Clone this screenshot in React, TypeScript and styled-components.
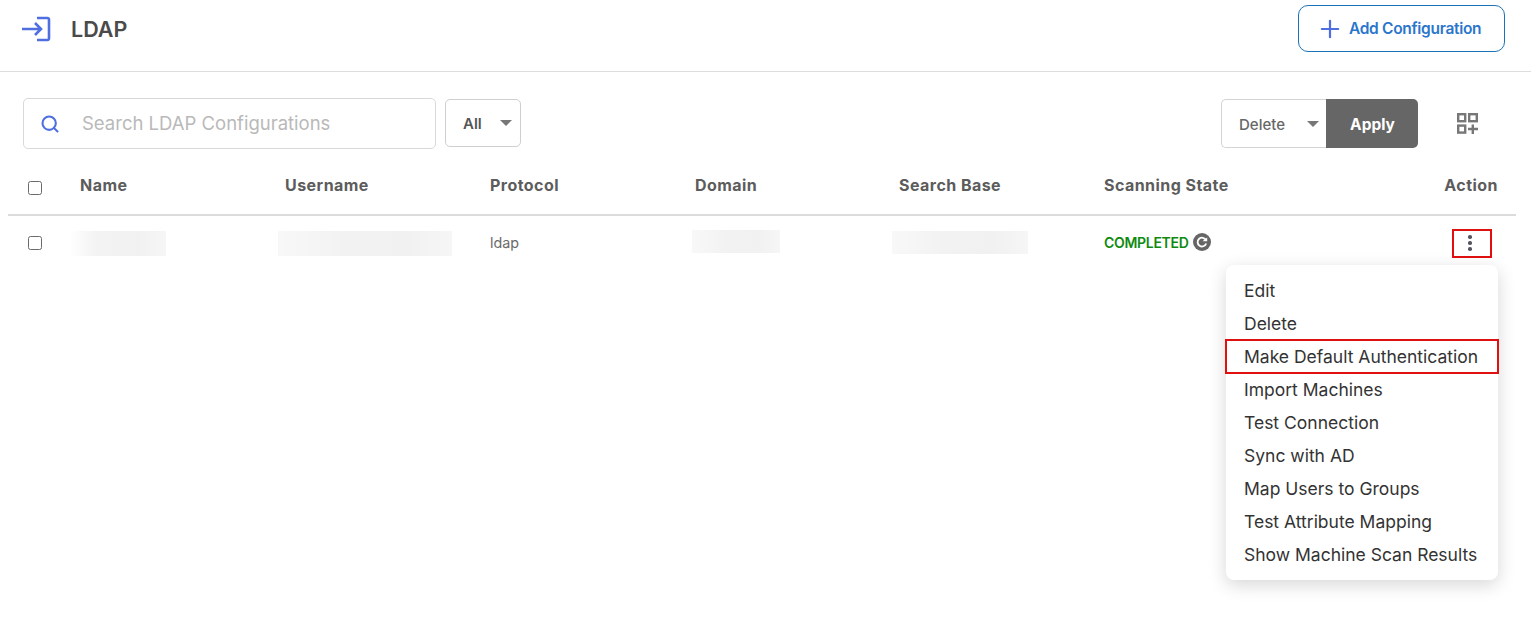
import React from 'react'
import styled, { createGlobalStyle } from 'styled-components'
import { Search, Plus } from 'lucide-react'

const GlobalStyle = createGlobalStyle`
  html, body {
    margin: 0;
    padding: 0;
    background: #ffffff;
    font-family: 'Inter', 'Open Sans', sans-serif;
    overflow: hidden;
  }
`

const columns = ['Name', 'Username', 'Protocol', 'Domain', 'Search Base', 'Scanning State']

const menuItems = [
  'Edit',
  'Delete',
  'Make Default Authentication',
  'Import Machines',
  'Test Connection',
  'Sync with AD',
  'Map Users to Groups',
  'Test Attribute Mapping',
  'Show Machine Scan Results',
]

const App = () => {
  return (
    <Page>
      <GlobalStyle />
      <Header>
        <TitleGroup>
          <svg width="30" height="28" viewBox="0 0 30 28" fill="none" stroke="#4f6fe0" strokeWidth="2.6">
            <path d="M1 14h19M14 8l6 6-6 6" />
            <path d="M16 3h10.5a1.5 1.5 0 0 1 1.5 1.5v19a1.5 1.5 0 0 1-1.5 1.5H16" />
          </svg>
          <Title>LDAP</Title>
        </TitleGroup>
        <AddButton>
          <Plus size={28} color="#4f6fe0" strokeWidth={1.9} />
          Add Configuration
        </AddButton>
      </Header>

      <Toolbar>
        <SearchBox>
          <Search size={20} color="#4f6fe0" strokeWidth={2.5} />
          <SearchPlaceholder>Search LDAP Configurations</SearchPlaceholder>
        </SearchBox>
        <FilterSelect>
          All
          <Caret />
        </FilterSelect>
        <BulkGroup>
          <BulkSelect>
            <SelectLabel>Delete</SelectLabel>
            <Caret />
          </BulkSelect>
          <ApplyButton>Apply</ApplyButton>
        </BulkGroup>
        <GridToggle>
          <svg width="21" height="21" viewBox="0 0 21 21" fill="none" stroke="#777777" strokeWidth="2.4">
            <rect x="1.2" y="1.2" width="7" height="7" />
            <rect x="12.2" y="1.2" width="7.6" height="7" />
            <rect x="1.2" y="12.6" width="7" height="7" />
            <path d="M15.8 11.5v9.5M11 16h10" />
          </svg>
        </GridToggle>
      </Toolbar>

      <Table>
        <HeadRow>
          <CheckCell>
            <CheckBox />
          </CheckCell>
          {columns.map(name => (
            <HeadCell key={name}>{name}</HeadCell>
          ))}
          <ActionHead>Action</ActionHead>
        </HeadRow>
        <BodyRow>
          <CheckCell>
            <CheckBox />
          </CheckCell>
          <Cell>
            <Blurred width={97} offset={-11} soft />
          </Cell>
          <Cell>
            <Blurred width={174} offset={-7} />
          </Cell>
          <TextCell>ldap</TextCell>
          <Cell>
            <Blurred width={88} offset={-3} lift={3} />
          </Cell>
          <Cell>
            <Blurred width={136} offset={-7} lift={2} />
          </Cell>
          <TextCell>
            <StateText>COMPLETED</StateText>
            <svg width="18" height="18" viewBox="0 0 18 18">
              <circle cx="9" cy="9" r="9" fill="#666666" />
              <path d="M13 7.2A4.4 4.4 0 1 0 13.2 10.5" fill="none" stroke="#ffffff" strokeWidth="1.8" />
              <path d="M9.5 8.2h4.7V4.4z" fill="#ffffff" />
            </svg>
          </TextCell>
          <ActionCell>
            <DotsButton>
              <Dot />
              <Dot />
              <Dot />
            </DotsButton>
            <Menu>
              {menuItems.map(item => (
                <MenuItem key={item} marked={item === 'Make Default Authentication'}>
                  {item}
                </MenuItem>
              ))}
            </Menu>
          </ActionCell>
        </BodyRow>
      </Table>
    </Page>
  )
}

const Page = styled.div`
  width: 1531px;
  height: 632px;
  background: #ffffff;
`

const Header = styled.header`
  height: 71px;
  border-bottom: 1px solid #dddddd;
  display: flex;
  align-items: flex-start;
  justify-content: space-between;
  padding: 0 26px 0 21px;
`

const TitleGroup = styled.div`
  display: flex;
  align-items: center;
  gap: 20px;
  height: 58px;
`

const Title = styled.h1`
  margin: 0;
  font-size: 21.5px;
  font-weight: 600;
  color: #4a4a4a;
`

const AddButton = styled.button`
  margin-top: 5px;
  width: 207px;
  height: 47px;
  display: flex;
  align-items: center;
  gap: 5px;
  padding: 0 0 0 17px;
  background: #ffffff;
  border: 1px solid #1a73b8;
  border-radius: 10px;
  color: #2a76cc;
  font-family: inherit;
  font-size: 15.5px;
  font-weight: 600;
  letter-spacing: -0.3px;
`

const Toolbar = styled.div`
  display: flex;
  align-items: center;
  height: 51px;
  margin-top: 26px;
  padding: 0 53px 0 23px;
`

const SearchBox = styled.div`
  width: 413px;
  height: 51px;
  box-sizing: border-box;
  display: flex;
  align-items: center;
  gap: 22px;
  padding-left: 16px;
  border: 1px solid #d9d9d9;
  border-radius: 5px;
`

const SearchPlaceholder = styled.span`
  padding-bottom: 2px;
  font-size: 18.5px;
  color: #b9b9b9;
`

const FilterSelect = styled.div`
  margin: 0 0 2px 9px;
  width: 76px;
  height: 48px;
  box-sizing: border-box;
  display: flex;
  align-items: center;
  justify-content: space-between;
  padding: 1px 8px 0 17px;
  border: 1px solid #cfcfcf;
  border-radius: 5px;
  font-size: 15px;
  font-weight: 600;
  color: #555555;
`

const Caret = styled.span`
  width: 0;
  height: 0;
  border-left: 6px solid transparent;
  border-right: 6px solid transparent;
  border-top: 6px solid #777777;
`

const BulkGroup = styled.div`
  margin-left: auto;
  display: flex;
`

const BulkSelect = styled.div`
  width: 105px;
  height: 49px;
  box-sizing: border-box;
  display: flex;
  align-items: center;
  justify-content: space-between;
  padding: 0 7px 0 17px;
  border: 1px solid #d4d4d4;
  border-right: 0;
  border-radius: 5px 0 0 5px;
  font-size: 15px;
  font-weight: 500;
  color: #666666;
`

const SelectLabel = styled.span`
  padding-top: 1px;
`

const ApplyButton = styled.button`
  width: 92px;
  height: 49px;
  padding: 1px 0 0 1px;
  background: #666666;
  border: 0;
  border-radius: 0 5px 5px 0;
  color: #ffffff;
  font-family: inherit;
  font-size: 15.5px;
  font-weight: 700;
`

const GridToggle = styled.div`
  margin-left: 39px;
  display: flex;
`

const Table = styled.div`
  margin: 12px 15px 0 8px;
`

const rowGrid = `
  display: grid;
  grid-template-columns: 72px 205px 205px 205px 204px 205px 205px 1fr;
  align-items: center;
`

const HeadRow = styled.div`
  ${rowGrid}
  height: 53px;
  border-bottom: 2px solid #dcdcdc;
`

const BodyRow = styled.div`
  ${rowGrid}
  height: 54px;
`

const CheckCell = styled.div`
  padding-left: 20px;
  display: flex;
`

const CheckBox = styled.span`
  width: 12px;
  height: 12px;
  border: 1px solid #6b6b6b;
  border-radius: 2.5px;
`

const HeadCell = styled.div`
  padding-bottom: 6px;
  font-size: 16px;
  font-weight: 700;
  letter-spacing: 0.45px;
  color: #5c5c5c;
  white-space: nowrap;
`

const ActionHead = styled(HeadCell)`
  text-align: right;
  padding-right: 18px;
`

const Cell = styled.div`
  display: flex;
  align-items: center;
  gap: 4px;
  font-size: 14px;
  color: #6a6a6a;
`

const TextCell = styled(Cell)`
  padding-bottom: 2px;
  font-size: 14.3px;
`

const Blurred = styled.div<{ width: number; offset: number; soft?: boolean; lift?: number }>`
  width: ${props => props.width}px;
  height: ${props => (props.lift ? 23 : 25)}px;
  margin-left: ${props => props.offset}px;
  margin-bottom: ${props => props.lift || 0}px;
  background: ${props =>
    props.soft
      ? 'linear-gradient(90deg, #ffffff 0%, #f3f3f3 28%, #f1f1f1 70%, #f6f6f6 100%)'
      : 'linear-gradient(90deg, #f8f8f8 0%, #f2f2f2 40%, #f1f1f1 75%, #f6f6f6 100%)'};
`

const StateText = styled.span`
  font-size: 14px;
  font-weight: 600;
  letter-spacing: -0.3px;
  color: #0f8a0f;
`

const ActionCell = styled.div`
  position: relative;
  display: flex;
  justify-content: flex-end;
  padding-right: 24px;
`

const DotsButton = styled.div`
  width: 40px;
  height: 29px;
  box-sizing: border-box;
  padding-right: 4px;
  border: 2px solid #e01010;
  display: flex;
  flex-direction: column;
  align-items: center;
  justify-content: center;
  gap: 2.5px;
`

const Dot = styled.span`
  width: 3.5px;
  height: 3.5px;
  border-radius: 50%;
  background: #555560;
`

const Menu = styled.div`
  position: absolute;
  top: 36px;
  right: 18px;
  width: 272px;
  box-sizing: border-box;
  padding: 9px 0;
  background: #ffffff;
  border-radius: 8px;
  box-shadow: 0 5px 18px rgba(0, 0, 0, 0.16);
  z-index: 2;
`

const MenuItem = styled.div<{ marked: boolean }>`
  height: 33px;
  line-height: 34px;
  padding-left: 18px;
  font-size: 17.5px;
  color: #333333;
  white-space: nowrap;
  outline: ${props => (props.marked ? '2px solid #e01010' : 'none')};
  outline-offset: -1px;
`

export default App
